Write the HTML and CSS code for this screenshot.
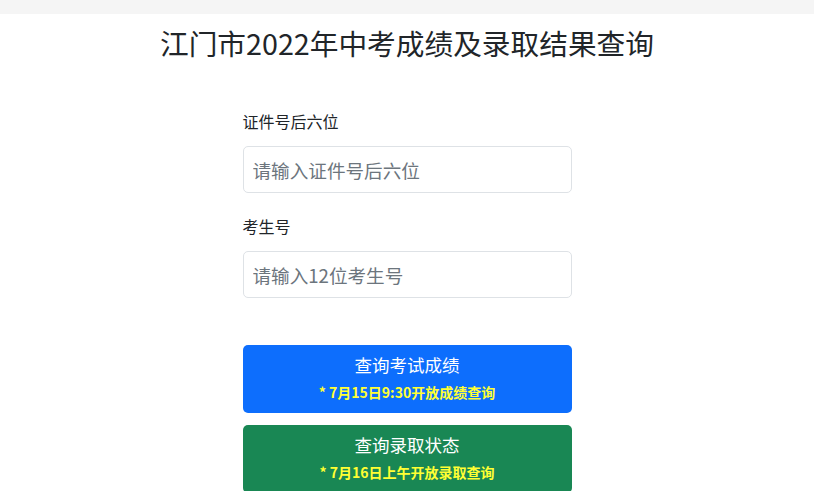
FILE: index.html
```html
<!DOCTYPE html>
<html lang="zh">
<head>
<meta charset="utf-8">
<title>江门市2022年中考成绩及录取结果查询</title>
<link rel="stylesheet" href="styles.css">
</head>
<body>
<div class="topbar"></div>
<h2 class="title">江门市2022年中考成绩及录取结果查询</h2>
<form class="form">
  <div class="field">
    <label class="label">证件号后六位</label>
    <input class="input" type="text" placeholder="请输入证件号后六位">
  </div>
  <div class="field">
    <label class="label">考生号</label>
    <input class="input" type="text" placeholder="请输入12位考生号">
  </div>
  <div class="buttons">
    <button type="button" class="btn btn-blue">
      <span class="btn-main">查询考试成绩</span>
      <span class="btn-sub">* 7月15日9:30开放成绩查询</span>
    </button>
    <button type="button" class="btn btn-green">
      <span class="btn-main">查询录取状态</span>
      <span class="btn-sub">* 7月16日上午开放录取查询</span>
    </button>
  </div>
</form>
</body>
</html>
```
FILE: styles.css
```css
html, body {
  margin: 0;
  padding: 0;
  background: #fff;
  font-family: "Noto Sans CJK SC", "Noto Sans", sans-serif;
  color: #212529;
}
.topbar {
  height: 14px;
  background: #f5f5f5;
}
.title {
  margin: 12px 0 0;
  text-align: center;
  font-size: 28.7px;
  font-weight: 400;
  line-height: 34px;
  color: #212529;
}
.form {
  width: 329px;
  margin: 49px auto 0;
  display: flex;
  flex-direction: column;
}
.field {
  display: flex;
  flex-direction: column;
  margin-bottom: 21px;
}
.label {
  font-size: 16px;
  line-height: 24px;
  margin-bottom: 13px;
}
.input {
  box-sizing: border-box;
  height: 47px;
  width: 100%;
  border: 1px solid #dee2e6;
  border-radius: 5px;
  padding: 0 9px;
  font-family: inherit;
  font-size: 18.6px;
  color: #212529;
  outline: none;
}
.input::placeholder {
  color: #6c757d;
}
.buttons {
  display: flex;
  flex-direction: column;
  gap: 12px;
  margin-top: 26px;
}
.btn {
  box-sizing: border-box;
  width: 100%;
  height: 68px;
  border: none;
  border-radius: 5px;
  display: flex;
  flex-direction: column;
  align-items: center;
  justify-content: center;
  font-family: inherit;
  color: #fff;
  padding: 0 0 2px;
}
.btn-blue { background: #0d6efd; }
.btn-green { background: #198754; }
.btn-main {
  font-size: 17.5px;
  line-height: 26px;
}
.btn-sub {
  margin-top: 2px;
  font-size: 14px;
  font-weight: 600;
  line-height: 24px;
  color: #ffff33;
}
```
